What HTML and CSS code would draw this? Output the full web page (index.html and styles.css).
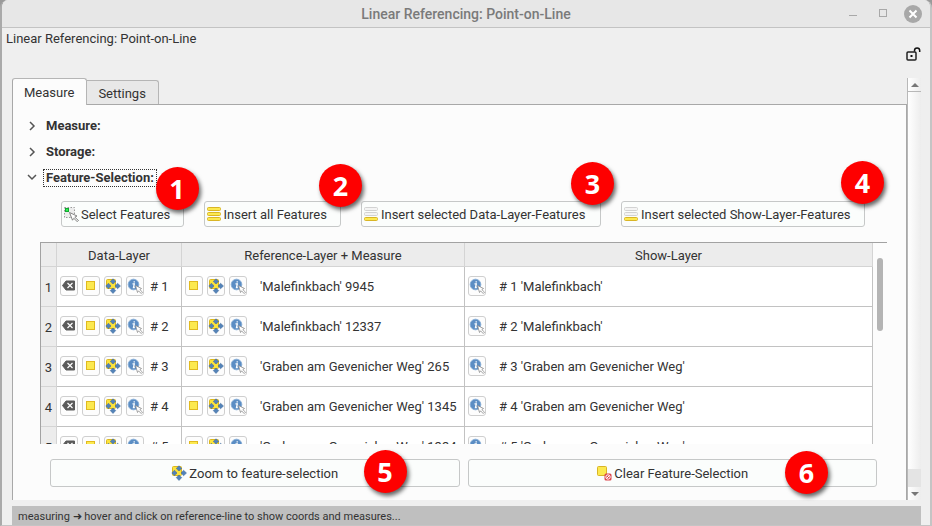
FILE: index.html
```html
<!DOCTYPE html>
<html lang="en">
<head>
<meta charset="utf-8">
<title>Linear Referencing: Point-on-Line</title>
<link rel="stylesheet" href="styles.css">
</head>
<body>
<svg class="sprite" aria-hidden="true">
  <symbol id="i-delete" viewBox="0 0 16 16">
    <path d="M1.500 7.500 5 3H13.500V12H5Z" fill="#5b5b5b" stroke="#5b5b5b" stroke-linejoin="round"/>
    <path d="M6.500 5l5 5M11.500 5l-5 5" stroke="#fff" stroke-width="1.200"/>
  </symbol>
  <symbol id="i-square" viewBox="0 0 16 16">
    <rect x="3.500" y="3.500" width="8" height="8" fill="#fce94f" stroke="#e0b91f"/>
  </symbol>
  <symbol id="i-zoom" viewBox="0 0 16 16">
    <rect x="1.500" y="1.500" width="9" height="9" rx="1" fill="#fce33c" stroke="#dcb71c"/>
    <g fill="#5383b8" stroke="#40699b" stroke-width=".5">
      <path d="M8 .8 10.800 3.500 9 4.800V5.500H7V4.800L5.200 3.500Z"/>
      <path d="M8 15.500 10.800 12.500 9 11.200V10.500H7V11.200L5.200 12.500Z"/>
      <path d="M.8 8 3.500 5.200 4.800 7H5.500V9H4.800L3.500 10.800Z"/>
      <path d="M15.500 8 12.500 5.200 11.200 7H10.500V9H11.200L12.500 10.800Z"/>
    </g>
  </symbol>
  <symbol id="i-info" viewBox="0 0 16 16">
    <circle cx="6.500" cy="6.500" r="5.300" fill="#5b8dc4" stroke="#86add6" stroke-width="1"/>
    <path d="M5.500 5.800H7.300L6.500 9.500H7.800M7.200 3.200v1.200" fill="none" stroke="#fff" stroke-width="1.300"/>
    <path d="M8.500 7.500 14.500 10.500 12.800 11.500 15.500 14.200 14.200 15.500 11.500 12.800 10.500 14.500Z" fill="#fff" stroke="#8b8b8b" stroke-width=".8"/>
  </symbol>
  <symbol id="i-select" viewBox="0 0 16 16">
    <rect x="1.500" y="1.500" width="10" height="10" fill="#ececec" stroke="#9a9a9a" stroke-dasharray="1.500 1.500"/>
    <rect x="2.500" y="2.500" width="3" height="3" fill="#30f050" stroke="#12a832"/>
    <path d="M6.500 6.500 14 10 11.800 11.200 15.500 14.500 14.200 15.600 10.800 12.300 9.500 14.200Z" fill="#fff" stroke="#777" stroke-width=".9"/>
  </symbol>
  <symbol id="i-all" viewBox="0 0 16 16">
    <g fill="#fce94f" stroke="#d9b526">
      <rect x="1.500" y="1.500" width="13" height="3" rx="1"/>
      <rect x="1.500" y="6.500" width="13" height="3" rx="1"/>
      <rect x="1.500" y="11.500" width="13" height="3" rx="1"/>
    </g>
  </symbol>
  <symbol id="i-some" viewBox="0 0 16 16">
    <g fill="#f4f4f4" stroke="#d2d2d2">
      <rect x="1.500" y="1.500" width="13" height="3" rx="1"/>
      <rect x="1.500" y="6.500" width="13" height="3" rx="1"/>
    </g>
    <rect x="1.500" y="11.500" width="13" height="3" rx="1" fill="#fce94f" stroke="#d9b526"/>
  </symbol>
  <symbol id="i-clear" viewBox="0 0 16 16">
    <rect x="1.500" y="1.500" width="9" height="9" rx="1" fill="#fce94f" stroke="#d9b526"/>
    <rect x="8.500" y="8.500" width="7" height="7" rx="1.500" fill="#dc4348"/>
    <circle cx="12" cy="12" r="2.200" fill="none" stroke="#fff"/>
    <path d="M10.500 13.500l3-3" stroke="#fff"/>
  </symbol>
</svg>

<div class="window">
  <header class="titlebar">
    <h1>Linear Referencing: Point-on-Line</h1>
    <div class="window-controls">
      <button aria-label="Minimize"><svg viewBox="0 0 18 18"><path d="M5 10.500h8" stroke="#a8a8a8"/></svg></button>
      <button aria-label="Maximize"><svg viewBox="0 0 18 18"><rect x="5.500" y="4.500" width="7" height="7" fill="none" stroke="#a8a8a8"/></svg></button>
      <button aria-label="Close"><svg viewBox="0 0 18 18"><circle cx="9" cy="9" r="9" fill="#a8a8a8"/><path d="M5.500 5.500l7 7M12.500 5.500l-7 7" stroke="#fff" stroke-width="2"/></svg></button>
    </div>
  </header>

  <div class="panel-head">
    <p>Linear Referencing: Point-on-Line</p>
    <button class="lock" aria-label="Unlock"><svg viewBox="0 0 16 16"><rect x="2" y="6" width="9" height="8" rx="1" fill="none" stroke="#222" stroke-width="1.500"/><rect x="5.500" y="9" width="2" height="2" fill="#111"/><path d="M9.500 5.500V4.500a2.600 2.600 0 0 1 5.200 0V6" fill="none" stroke="#111" stroke-width="1.500"/></svg></button>
  </div>

  <main class="workspace">
    <div class="tabs">
      <div class="tablist" role="tablist">
        <button class="tab active" role="tab" aria-selected="true">Measure</button>
        <button class="tab" role="tab" aria-selected="false">Settings</button>
      </div>
      <section class="page">
        <div class="sections">
          <button class="section" aria-expanded="false"><svg viewBox="0 0 10 10"><path d="M3 1l4 4-4 4" /></svg><span>Measure:</span></button>
          <button class="section" aria-expanded="false"><svg viewBox="0 0 10 10"><path d="M3 1l4 4-4 4" /></svg><span>Storage:</span></button>
          <button class="section focused" aria-expanded="true"><svg viewBox="0 0 10 10"><path d="M1 2l4 4 4-4" /></svg><span>Feature-Selection:</span></button>
        </div>

        <div class="actions">
          <div class="anchor"><button class="btn"><svg><use href="#i-select"/></svg><span>Select Features</span></button><span class="badge b1">1</span></div>
          <div class="anchor"><button class="btn"><svg><use href="#i-all"/></svg><span>Insert all Features</span></button><span class="badge b2">2</span></div>
          <div class="anchor"><button class="btn"><svg><use href="#i-some"/></svg><span>Insert selected Data-Layer-Features</span></button><span class="badge b3">3</span></div>
          <div class="anchor"><button class="btn"><svg><use href="#i-some"/></svg><span>Insert selected Show-Layer-Features</span></button><span class="badge b4">4</span></div>
        </div>

        <div class="grid-view">
          <table>
            <colgroup><col class="c-num"><col class="c-data"><col class="c-ref"><col></colgroup>
            <thead><tr><th></th><th>Data-Layer</th><th>Reference-Layer + Measure</th><th>Show-Layer</th></tr></thead>
            <tbody id="rows"></tbody>
          </table>
          <div class="grid-scroll"><div class="thumb"></div></div>
        </div>

        <div class="footer-actions">
          <div class="anchor"><button class="btn"><svg><use href="#i-zoom"/></svg><span>Zoom to feature-selection</span></button><span class="badge b5">5</span></div>
          <div class="anchor"><button class="btn"><svg><use href="#i-clear"/></svg><span>Clear Feature-Selection</span></button><span class="badge b6">6</span></div>
        </div>
      </section>
    </div>
    <div class="scrollbar">
      <button aria-label="Scroll up"><svg viewBox="0 0 8 4"><path d="M0 4 4 0 8 4Z" fill="#777"/></svg></button>
      <div class="track"></div>
      <button aria-label="Scroll down"><svg viewBox="0 0 8 4"><path d="M0 0 4 4 8 0Z" fill="#777"/></svg></button>
    </div>
  </main>

  <footer class="status">measuring ➜ hover and click on reference-line to show coords and measures...</footer>
</div>
<script src="rows.js"></script>
</body>
</html>
```
FILE: rows.js
```js
const features = [
  ["Malefinkbach", 9945],
  ["Malefinkbach", 12337],
  ["Graben am Gevenicher Weg", 265],
  ["Graben am Gevenicher Weg", 1345],
  ["Graben am Gevenicher Weg", 1334],
];
const tool = (icon, label) =>
  `<button class="tool" aria-label="${label}"><svg><use href="#i-${icon}"/></svg></button>`;
const common = tool("square", "Highlight") + tool("zoom", "Zoom to") + tool("info", "Show form");

document.getElementById("rows").innerHTML = features.map(([name, measure], i) => `
  <tr>
    <th scope="row">${i + 1}</th>
    <td><div class="cell">${tool("delete", "Remove")}${common}<span># ${i + 1}</span></div></td>
    <td><div class="cell wide">${common}<span>'${name}' ${measure}</span></div></td>
    <td><div class="cell wide">${tool("info", "Show form")}<span># ${i + 1} '${name}'</span></div></td>
  </tr>`).join("");
```
FILE: styles.css
```css
* { box-sizing: border-box; }

body {
  margin: 0;
  background: #9a9a9a;
  color: #333;
  font: 13px/20px Roboto, "Noto Sans", sans-serif;
}

button {
  margin: 0;
  padding: 0;
  border: 0;
  background: none;
  color: inherit;
  font: inherit;
}

svg { display: block; flex: none; }
.sprite { position: absolute; width: 0; height: 0; }

.window {
  display: flex;
  flex-direction: column;
  height: 100vh;
  border-left: 2px solid #aaa;
  border-right: 2px solid #c4c4c4;
  border-bottom: 1px solid #c4c4c4;
  border-radius: 8px 8px 0 0;
  background: #efefef;
  overflow: hidden;
}

.titlebar {
  display: grid;
  grid-template-columns: 1fr auto 1fr;
  align-items: center;
  flex: none;
  height: 28px;
  border-bottom: 1px solid #c3c3c3;
  background: #e7e7e7;
}
.titlebar h1 {
  grid-column: 2;
  margin: 0;
  color: #7a7a7a;
  font-size: 14px;
  font-weight: 500;
}
.window-controls {
  display: flex;
  justify-content: flex-end;
  gap: 12px;
  padding-right: 8px;
}
.window-controls svg { width: 18px; height: 18px; }

.panel-head {
  display: flex;
  justify-content: space-between;
  flex: none;
  height: 50px;
  padding: 0 9px 0 4px;
}
.panel-head p { margin: 0; line-height: 22px; }
.lock { align-self: flex-end; margin-bottom: 16px; }
.lock svg { width: 16px; height: 16px; }

.workspace {
  display: flex;
  flex: 1;
  min-height: 0;
  padding: 0 9px 0 10px;
}
.tabs {
  display: flex;
  flex: 1;
  flex-direction: column;
  min-width: 0;
}
.tablist { display: flex; align-items: flex-end; flex: none; }
.tab {
  height: 24px;
  padding: 2px 12px 0 11px;
  border: 1px solid #b5b5b5;
  border-bottom: 0;
  border-left: 0;
  border-radius: 0 3px 0 0;
  background: #e8e8e8;
}
.tab.active {
  z-index: 1;
  height: 27px;
  margin-bottom: -1px;
  border-left: 1px solid #a8a8a8;
  border-radius: 3px 3px 0 0;
  background: #fcfcfc;
}
.page {
  display: flex;
  flex: 1;
  flex-direction: column;
  min-height: 0;
  border: 1px solid #a8a8a8;
  border-bottom: 0;
  background: #fcfcfc;
}

.sections {
  display: grid;
  justify-items: start;
  padding: 8px 0 0 14px;
}
.section {
  display: flex;
  align-items: center;
  gap: 7px;
  height: 26px;
  font-weight: 700;
}
.section svg {
  width: 10px;
  height: 10px;
  fill: none;
  stroke: #555;
  stroke-width: 1.5;
}
.section span { padding: 0 2px; line-height: 16px; }
.section.focused span { outline: 1px dotted #333; }

.anchor { position: relative; }
.btn {
  display: flex;
  align-items: center;
  gap: 2px;
  width: 100%;
  height: 26px;
  padding: 0 1px;
  border: 1px solid #c6c8c8;
  border-radius: 3px;
  background: #fbfdfc;
  white-space: nowrap;
}
.btn svg { width: 16px; height: 16px; }
.btn span { line-height: 22px; padding-top: 2px; }

.actions {
  display: grid;
  grid-template-columns: 123fr 138fr 241fr 245fr;
  gap: 20px;
  padding: 10px 41px 0 48px;
}
.footer-actions {
  display: grid;
  grid-template-columns: 1fr 1fr;
  gap: 8px;
  flex: none;
  padding: 15px 29px 13px 37px;
}
.footer-actions .btn { justify-content: center; height: 28px; }

.badge {
  position: absolute;
  z-index: 2;
  width: 43px;
  height: 43px;
  border-radius: 50%;
  background: #fe0000;
  box-shadow: 2px 3px 4px rgba(0, 0, 0, .6);
  color: #fff;
  font: 700 27px/43px "Noto Sans", sans-serif;
  text-align: center;
}
.b1 { top: -34px; right: -15px; }
.b2 { top: -37px; right: -21px; }
.b3 { top: -39px; right: -13px; }
.b4 { top: -40px; right: -19px; }
.b5 { top: -9px; right: 53px; }
.b6 { top: -8px; right: 49px; }

.grid-view {
  display: flex;
  align-items: flex-start;
  flex: 1;
  min-height: 0;
  margin: 15px 19px 0 27px;
  border-top: 1px solid #a2a2a2;
  border-left: 1px solid #a2a2a2;
  overflow: hidden;
}
table {
  flex: 1;
  width: 100%;
  min-width: 0;
  border-collapse: separate;
  border-spacing: 0;
  table-layout: fixed;
  background: #fff;
}
.c-num { width: 16px; }
.c-data { width: 125px; }
.c-ref { width: 283px; }
th {
  padding: 2px 0 0;
  border-right: 1px solid #d4d4d4;
  border-bottom: 1px solid #d4d4d4;
  background: #ececec;
  font-weight: 400;
}
thead th { height: 24px; }
td {
  height: 40px;
  padding: 0 3px 1px;
  border-right: 1px solid #c2c2c2;
  border-bottom: 1px solid #c2c2c2;
}
.cell { display: flex; align-items: center; gap: 4px; height: 20px; white-space: nowrap; }
.cell span { padding: 2px 0 0 2px; }
.cell.wide span { padding-left: 9px; }
.tool {
  flex: none;
  width: 18px;
  height: 20px;
  border: 1px solid #cfcfcf;
  border-radius: 3px;
  background: #fdfdfd;
}
.tool svg { width: 16px; height: 16px; }
.grid-scroll { flex: none; width: 14px; padding: 15px 4px; }
.thumb { width: 6px; height: 73px; border-radius: 3px; background: #b4b4b4; }

.scrollbar {
  display: flex;
  flex: none;
  flex-direction: column;
  width: 14px;
  border-left: 1px solid #b8b8b8;
  background: linear-gradient(90deg, #fff, #ededed);
}
.scrollbar button {
  display: grid;
  place-items: center;
  height: 13px;
}
.scrollbar svg { width: 8px; height: 4px; }
.track { flex: 1; border-top: 1px solid #b8b8b8; border-bottom: 18px solid #e4e4e4; }

.status {
  flex: none;
  height: 19px;
  margin: 6px 9px 0 10px;
  padding-left: 6px;
  background: #bfbfbf;
  font-size: 11px;
  line-height: 22px;
  white-space: nowrap;
}
```
